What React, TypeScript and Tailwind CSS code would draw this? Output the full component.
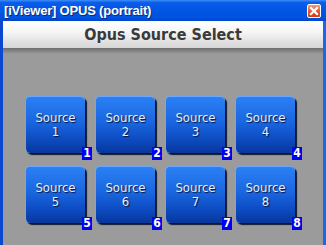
import React from 'react';

const sources = [1, 2, 3, 4, 5, 6, 7, 8];

function SourceButton({ n }: { n: number }) {
  return (
    <div className="relative w-[60px] h-[57px]">
      <button className="w-full h-full rounded-[5px] border-t border-l border-[#6aa8ff] bg-[linear-gradient(to_bottom,#2b80f4_0%,#1a66e0_45%,#0d4cc2_75%,#08369c_100%)] shadow-[2px_2px_1px_rgba(5,15,40,0.95)] flex flex-col items-center justify-center text-[13px] leading-[14px] text-[#e8eff9] [text-shadow:1px_1px_1px_#04143a] font-['DejaVu_Sans_Condensed','Liberation_Sans',sans-serif]">
        <span>Source</span>
        <span>{n}</span>
      </button>
      <div className="absolute right-[-7px] bottom-[-7px] w-[10px] h-[13px] bg-[#0000f4] text-white text-[12px] leading-[13px] font-bold text-center font-['DejaVu_Sans_Condensed','Liberation_Sans',sans-serif]">
        {n}
      </div>
    </div>
  );
}

export default function App() {
  return (
    <div className="w-[326px] h-[245px] overflow-hidden flex flex-col bg-[#0a50dc]">
      {/* title bar */}
      <div className="h-[21px] shrink-0 flex items-center justify-between pl-[4px] pr-[5px] bg-[linear-gradient(to_bottom,#3d8ef8_0%,#0c5de8_12%,#0055e4_50%,#0052df_85%,#0044c8_100%)]">
        <span className="text-white text-[13px] font-bold font-['Liberation_Sans',sans-serif] [text-shadow:1px_1px_0_#0a2a80] tracking-[-0.2px]">
          [iViewer] OPUS (portrait)
        </span>
        <div className="w-[14px] h-[14px] rounded-[2px] border border-white bg-[linear-gradient(to_bottom,#f49a78,#e05428_60%,#c8401a)] flex items-center justify-center">
          <svg width="10" height="10" viewBox="0 0 10 10">
            <path d="M2 2 L8 8 M8 2 L2 8" stroke="white" strokeWidth="2.2" strokeLinecap="square" />
          </svg>
        </div>
      </div>

      {/* client area */}
      <div className="flex-1 flex px-[3px] bg-[linear-gradient(to_right,#0a48d0,#1a66ee)]">
        <div className="flex-1 flex flex-col bg-[#9b9b9b]">
          <div className="h-[27px] shrink-0 flex items-center justify-center bg-[linear-gradient(to_bottom,#ffffff_0%,#f6f6f6_40%,#e2e2e2_75%,#d6d6d6_100%)]">
            <span className="text-[16px] font-bold text-[#3a3a3a] font-['DejaVu_Sans_Condensed','Liberation_Sans',sans-serif]">
              Opus Source Select
            </span>
          </div>
          <div className="h-[6px] shrink-0 bg-[linear-gradient(to_bottom,#6e6e6e,#9b9b9b)]" />
          <div className="pt-[42px] pl-[22px] grid grid-cols-[repeat(4,60px)] gap-x-[10px] gap-y-[13px]">
            {sources.map((n) => (
              <SourceButton key={n} n={n} />
            ))}
          </div>
        </div>
      </div>
    </div>
  );
}
